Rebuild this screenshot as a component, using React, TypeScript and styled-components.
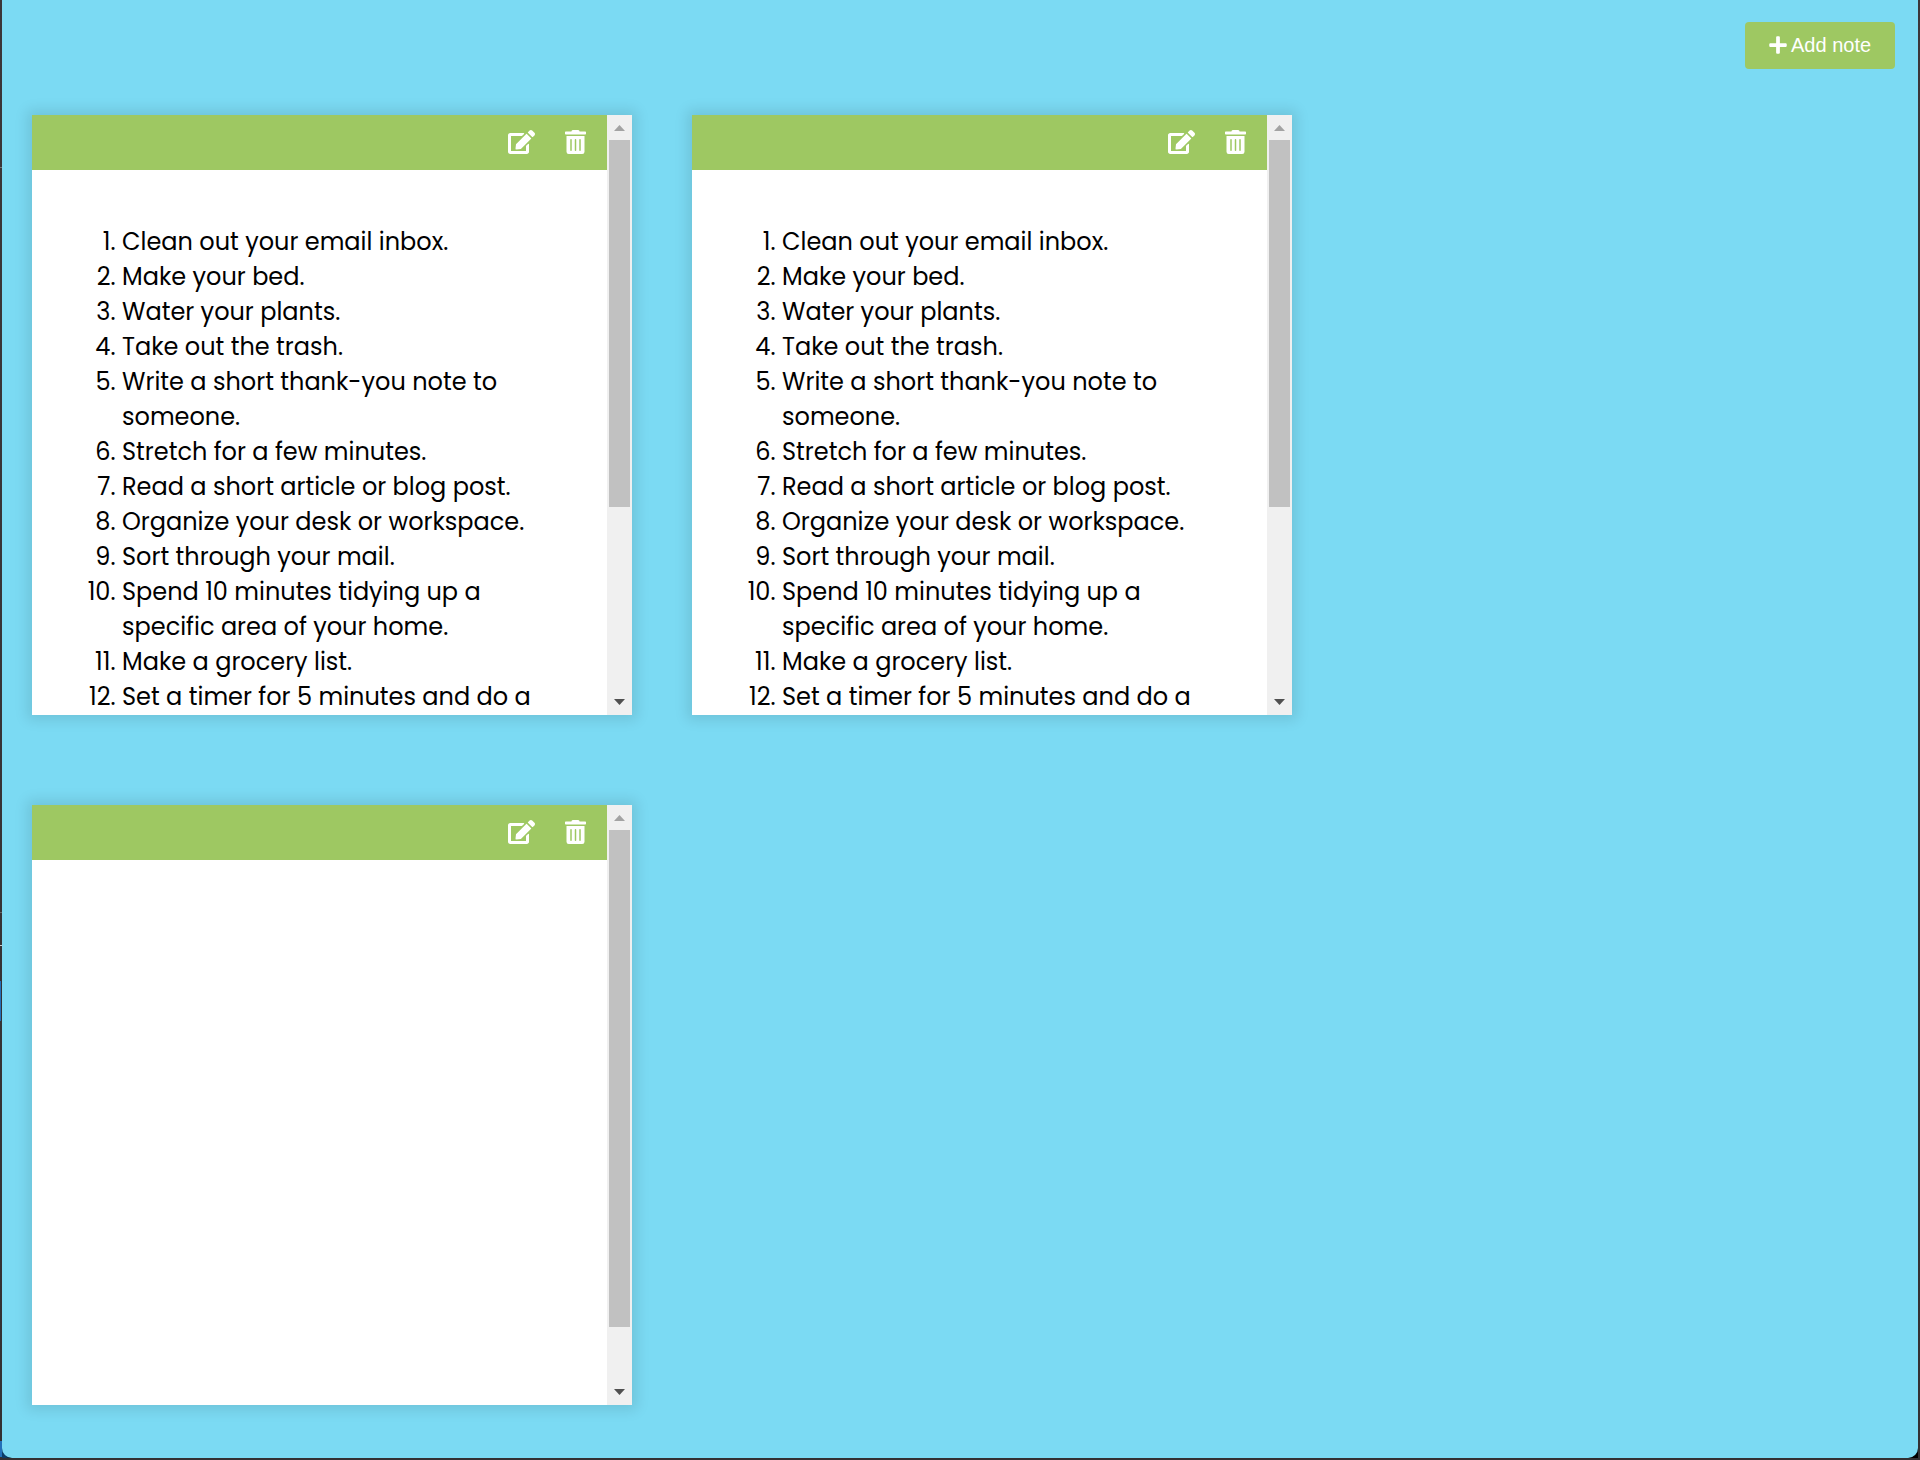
import React from 'react';
import styled, { createGlobalStyle } from 'styled-components';
import { FaEdit, FaPlus, FaTrashAlt } from 'react-icons/fa';

const GlobalStyle = createGlobalStyle`
  * { box-sizing: border-box; }
  body { margin: 0; background: #333; }
`;

const Frame = styled.div`
  display: flex;
  width: 1920px;
  height: 1460px;
  padding: 0 2px 2px 0;
  overflow: hidden;
  background: linear-gradient(#3b3639, #333133);
`;

const Edge = styled.div`
  display: flex;
  flex-direction: column;
  width: 2px;
  flex: none;
`;

const EdgeMark = styled.div<{ $gap: number; $h: number; $color: string }>`
  margin-top: ${(p) => p.$gap}px;
  height: ${(p) => p.$h}px;
  background: ${(p) => p.$color};
`;

const Backdrop = styled.div`
  flex: 1;
  display: flex;
  background: linear-gradient(90deg, #0c3d68 4px, #000 10px);
`;

const Page = styled.main`
  flex: 1;
  display: flex;
  flex-direction: column;
  background: #7bdaf3;
  border-radius: 0 0 10px 10px;
  overflow: hidden;
`;

const Toolbar = styled.header`
  display: flex;
  justify-content: flex-end;
  height: 115px;
  padding: 22px 23px 0 0;
`;

const AddButton = styled.button`
  display: flex;
  align-items: center;
  gap: 3px;
  width: 150px;
  height: 47px;
  padding: 0 0 1px 23px;
  border: 0;
  border-radius: 4px;
  background: #9ec862;
  color: #fff;
  font: 20px/24px 'Liberation Sans', Arial, sans-serif;
  white-space: nowrap;
  svg { width: 20px; height: 20px; flex: none; }
`;

const Board = styled.section`
  display: grid;
  grid-template-columns: 600px 600px;
  grid-auto-rows: 600px;
  gap: 90px 60px;
  padding-left: 30px;
`;

const Card = styled.article`
  display: flex;
  background: #fff;
  box-shadow: 0 0 12.5px 5px rgba(0, 0, 0, 0.1);
  overflow: hidden;
`;

const CardMain = styled.div`
  display: flex;
  flex-direction: column;
  width: 575px;
  height: 600px;
  overflow: hidden;
`;

const Tools = styled.div`
  display: flex;
  flex: none;
  justify-content: flex-end;
  align-items: center;
  height: 55px;
  padding: 0 21px 1px 0;
  gap: 30px;
  background: #9ec862;
`;

const ToolButton = styled.button<{ $w: number }>`
  display: flex;
  width: ${(p) => p.$w}px;
  height: 24px;
  padding: 0;
  border: 0;
  background: none;
  color: #fff;
  svg { width: 100%; height: 24px; }
`;

const List = styled.ol`
  margin: 0;
  padding: 54px 0 0;
  list-style: none;
  color: #000;
  font: 24px/35px Poppins, Inter, 'Open Sans', sans-serif;
`;

const Item = styled.li`
  display: grid;
  grid-template-columns: 83.5px 1fr;
  column-gap: 6.5px;
`;

const Marker = styled.span`
  text-align: right;
`;

const Line = styled.span`
  display: block;
  width: max-content;
  white-space: nowrap;
`;

const Scrollbar = styled.div`
  display: flex;
  flex-direction: column;
  align-items: center;
  justify-content: space-between;
  width: 25px;
  padding: 10px 0;
  background: #f0f0f0;
`;

const Arrow = styled.svg`
  display: block;
  flex: none;
  width: 11px;
  height: 6px;
`;

const Track = styled.div`
  width: 21px;
  height: 550px;
`;

const Thumb = styled.div<{ $h: number }>`
  height: ${(p) => p.$h}px;
  background: #c1c1c1;
`;

const tasks: string[][] = [
  ['Clean out your email inbox.'],
  ['Make your bed.'],
  ['Water your plants.'],
  ['Take out the trash.'],
  ['Write a short thank-you note to', 'someone.'],
  ['Stretch for a few minutes.'],
  ['Read a short article or blog post.'],
  ['Organize your desk or workspace.'],
  ['Sort through your mail.'],
  ['Spend 10 minutes tidying up a', 'specific area of your home.'],
  ['Make a grocery list.'],
  ['Set a timer for 5 minutes and do a'],
];

function Note({ items, thumb }: { items: string[][]; thumb: number }) {
  return (
    <Card>
      <CardMain>
        <Tools>
          <ToolButton $w={27} aria-label="Edit"><FaEdit /></ToolButton>
          <ToolButton $w={21} aria-label="Delete"><FaTrashAlt /></ToolButton>
        </Tools>
        <List>
          {items.map((lines, i) => (
            <Item key={i}>
              <Marker>{i + 1}.</Marker>
              <div>
                {lines.map((text) => (
                  <Line key={text}>{text}</Line>
                ))}
              </div>
            </Item>
          ))}
        </List>
      </CardMain>
      <Scrollbar>
        <Arrow viewBox="0 0 11 6"><path d="M5.5 0L11 6H0Z" fill="#a3a3a3" /></Arrow>
        <Track><Thumb $h={thumb} /></Track>
        <Arrow viewBox="0 0 11 6"><path d="M0 0H11L5.5 6Z" fill="#505050" /></Arrow>
      </Scrollbar>
    </Card>
  );
}

export default function App() {
  return (
    <Frame>
      <GlobalStyle />
      <Edge>
        <EdgeMark $gap={167} $h={1} $color="#777" />
        <EdgeMark $gap={744} $h={1} $color="#666" />
        <EdgeMark $gap={32} $h={1} $color="#ccc" />
        <EdgeMark $gap={35} $h={40} $color="linear-gradient(90deg, #2470b8 1px, #353235 1px)" />
        <EdgeMark $gap={420} $h={16} $color="#2470b8" />
      </Edge>
      <Backdrop>
        <Page>
          <Toolbar>
            <AddButton><FaPlus /><span>Add note</span></AddButton>
          </Toolbar>
          <Board>
            <Note items={tasks} thumb={367} />
            <Note items={tasks} thumb={367} />
            <Note items={[]} thumb={497} />
          </Board>
        </Page>
      </Backdrop>
    </Frame>
  );
}
